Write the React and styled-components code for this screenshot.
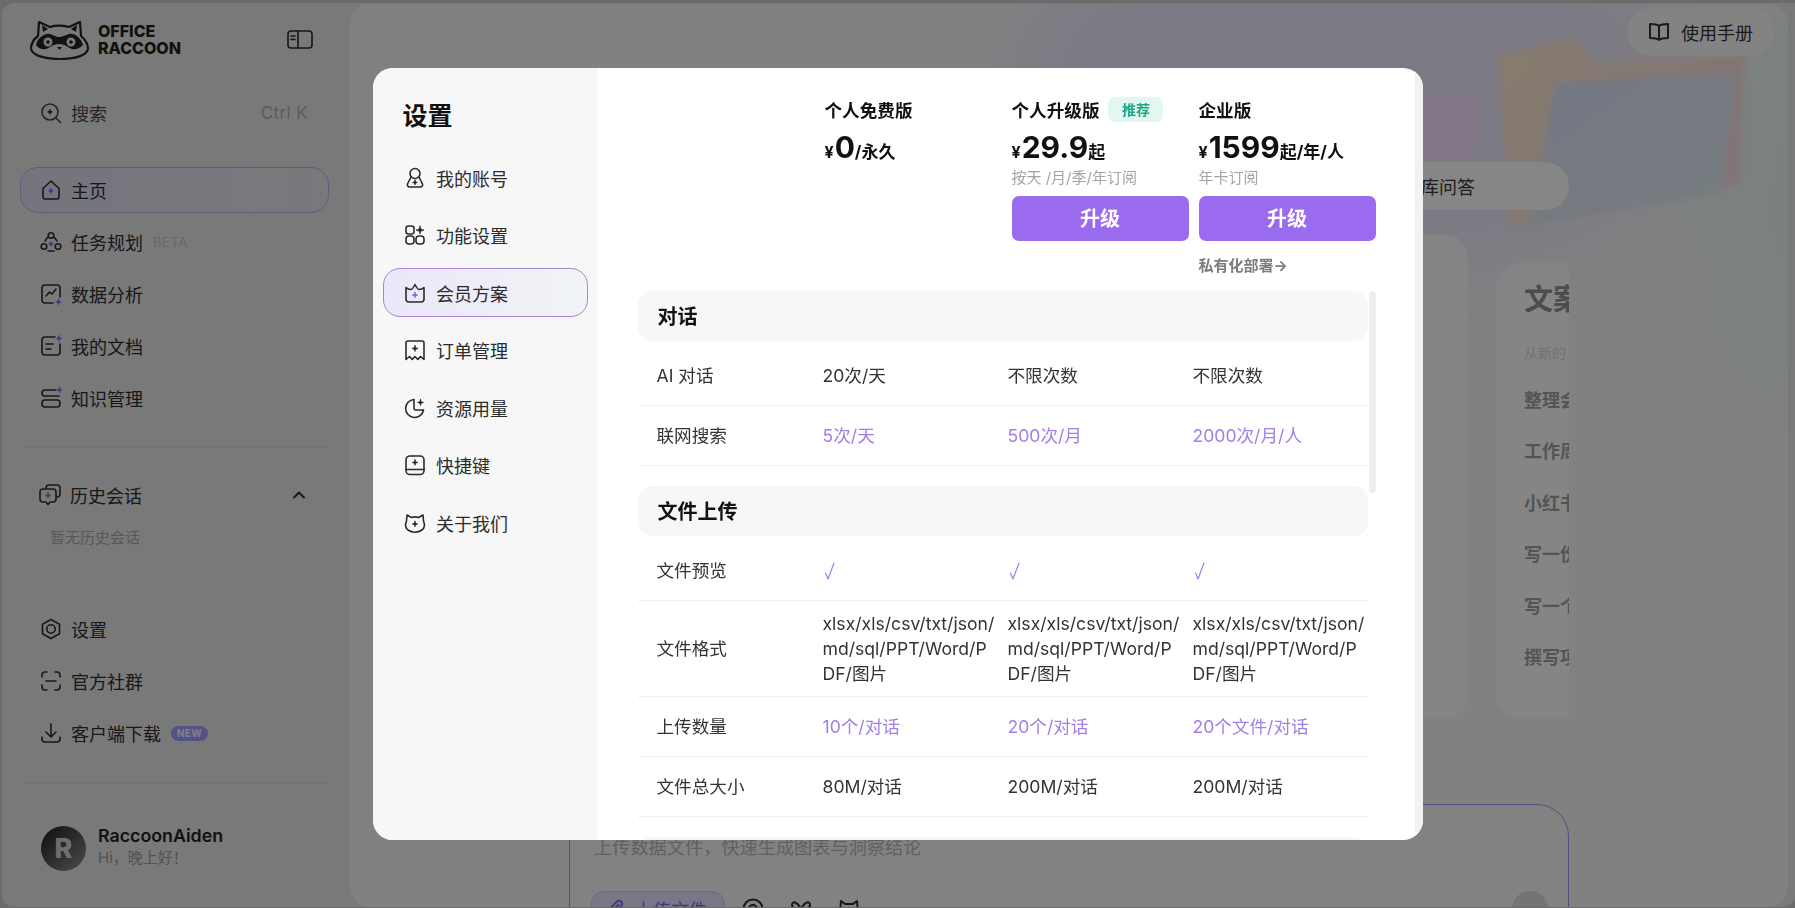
import React from "react";
import styled, { createGlobalStyle } from "styled-components";

const PURPLE = "#7c5ce0";

const GlobalStyle = createGlobalStyle`
  html, body {
    margin: 0;
    height: 100%;
    overflow: hidden;
    background: #c4c4c4;
    font-family: Inter, "Noto Sans CJK SC", sans-serif;
    color: #2a2a2a;
  }
  * { box-sizing: border-box; }
`;

const Shell = styled.div`
  display: flex;
  height: 904px;
  margin: 3px 0 0 2px;
  background: #dcdcdc;
  border-radius: 12px 0 12px 12px;
  overflow: hidden;
`;

/* ---------- app sidebar ---------- */

const Sidebar = styled.aside`
  width: 348px;
  flex-shrink: 0;
  padding: 0 21px 0 18px;
  display: flex;
  flex-direction: column;
`;

const BrandRow = styled.div`
  height: 87px;
  padding: 15px 0 0 10px;
  display: flex;
  align-items: flex-start;
`;

const BrandText = styled.div`
  margin: 5px 0 0 8px;
  font-size: 16px;
  line-height: 16.5px;
  font-weight: 800;
  color: #1e1e1e;
`;

const CollapseBtn = styled.div`
  margin: 12px 0 0 auto;
  padding-right: 16px;
  display: flex;
`;

const SearchBox = styled.div`
  height: 46px;
  border: 1px solid #e2e2e2;
  border-radius: 18px;
  padding: 0 20px 0 18px;
  display: flex;
  align-items: center;
  gap: 8px;
  font-size: 18px;
  color: #444;
`;

const Shortcut = styled.span`
  margin-left: auto;
  color: #a8a8a8;
  font-size: 17px;
  letter-spacing: 0.4px;
`;

const NavList = styled.nav`
  display: flex;
  flex-direction: column;
  gap: 6px;
  margin-top: ${(p) => p.$top || 0}px;
`;

const NavItem = styled.div`
  height: 46px;
  border-radius: 18px;
  padding: 0 18px;
  border: 1px solid ${(p) => (p.$active ? "#aca9ea" : "transparent")};
  background: ${(p) => (p.$active ? "linear-gradient(90deg,#d5d4e6,#dcdce2)" : "transparent")};
  display: flex;
  align-items: center;
  gap: 8px;
  font-size: 18px;
  color: #2c2c2c;
`;

const BetaTag = styled.span`
  margin-left: 2px;
  font-size: 13px;
  letter-spacing: 0.6px;
  color: #bdbdbd;
`;

const NewTag = styled.span`
  margin-left: 2px;
  width: 37px;
  height: 15px;
  border-radius: 8px;
  background: linear-gradient(90deg, #8a9cf4, #ae8cf4);
  color: #e0e4f8;
  font-size: 10px;
  font-weight: 800;
  line-height: 15px;
  text-align: center;
  letter-spacing: 0.4px;
`;

const Divider = styled.div`
  height: 1px;
  background: #d2d2d2;
  margin-top: ${(p) => p.$top}px;
`;

const HistoryHead = styled.div`
  margin-top: 35px;
  height: 24px;
  padding: 0 20px 0 18px;
  display: flex;
  align-items: center;
  gap: 8px;
  font-size: 18px;
  color: #2c2c2c;
`;

const Chevron = styled.span`
  margin-left: auto;
  display: flex;
`;

const EmptyNote = styled.div`
  margin: 22px 0 0 30px;
  font-size: 15px;
  line-height: 18px;
  color: #a0a0a0;
`;

const UserRow = styled.div`
  margin: 41px 0 0 21px;
  display: flex;
  align-items: center;
  gap: 12px;
`;

const Avatar = styled.div`
  width: 45px;
  height: 45px;
  border-radius: 50%;
  background: linear-gradient(135deg, #2a2a2a 15%, #8c8c8c);
  color: #c8c8c8;
  font-size: 27px;
  font-weight: 800;
  display: flex;
  align-items: center;
  justify-content: center;
`;

const UserInfo = styled.div`
  margin-bottom: 2px;
`;

const UserName = styled.div`
  font-size: 17.8px;
  line-height: 22px;
  font-weight: 600;
  color: #222;
`;

const UserHint = styled.div`
  font-size: 15px;
  line-height: 22px;
  color: #959595;
`;

/* ---------- page behind the dialog ---------- */

const Main = styled.main`
  position: relative;
  width: 1438px;
  height: 903px;
  margin-top: 1px;
  background: #ececec;
  border-radius: 20px;
  overflow: hidden;
`;

const Backdrop = styled.svg`
  position: absolute;
  inset: 0;
`;

const MainTop = styled.div`
  position: relative;
  height: 158px;
  padding: 4px 14px 0 0;
  display: flex;
  justify-content: flex-end;
  align-items: flex-start;
`;

const ManualBtn = styled.div`
  width: 147px;
  height: 48px;
  border-radius: 24px;
  background: #eeeeee;
  display: flex;
  align-items: center;
  gap: 10px;
  padding-left: 20px;
  font-size: 18px;
  color: #333;
`;

const Column = styled.div`
  position: relative;
  width: 1000px;
  margin-left: 219px;
`;

const TabPill = styled.div`
  height: 48px;
  border-radius: 24px;
  background: #f4f4f4;
  display: flex;
  align-items: center;
  justify-content: flex-end;
  padding-right: 94px;
  font-size: 18px;
  color: #333;
`;

const CardRow = styled.div`
  height: 484px;
  margin-top: 24px;
  display: flex;
  align-items: flex-end;
  gap: 28px;
  overflow: hidden;
`;

const Card = styled.section`
  flex: 0 0 ${(p) => p.$w}px;
  height: ${(p) => p.$h}px;
  padding: 19px 0 0 28px;
  border-radius: 24px;
  background: rgba(245, 245, 245, 0.7);
  overflow: hidden;
  white-space: nowrap;
`;

const CardTitle = styled.h3`
  margin: 0;
  font-size: 29px;
  line-height: 36px;
  font-weight: 700;
  color: #8a8a8a;
`;

const CardSub = styled.p`
  margin: 26px 0 27px;
  font-size: 14px;
  line-height: 18px;
  color: #cfcfcf;
`;

const CardLine = styled.div`
  height: 51.4px;
  font-size: 18px;
  line-height: 24px;
  font-weight: 700;
  color: #9a9a9a;
`;

const Composer = styled.div`
  margin-top: 86px;
  height: 160px;
  border: 1px solid #9a90ee;
  border-radius: 32px;
  padding: 30px 20px 0 24px;
  background: #ededed;
`;

const Placeholder = styled.div`
  font-size: 18.2px;
  line-height: 24px;
  color: #b0b0b0;
`;

const ComposerTools = styled.div`
  margin: 32px 0 0 -3px;
  display: flex;
  align-items: center;
  gap: 24px;
`;

const UploadBtn = styled.div`
  width: 134px;
  height: 36px;
  margin-right: -8px;
  border-radius: 13px;
  border: 1px solid #c8c0ee;
  background: #dcd8f4;
  display: flex;
  align-items: center;
  gap: 8px;
  padding-left: 13px;
  font-size: 18px;
  color: #7b5fd8;
`;

const SendBtn = styled.div`
  margin-left: auto;
  width: 36px;
  height: 36px;
  border-radius: 50%;
  background: #d4d4d4;
`;

/* ---------- settings dialog ---------- */

const Overlay = styled.div`
  position: fixed;
  inset: 0;
  background: rgba(0, 0, 0, 0.45);
  display: flex;
  align-items: center;
  justify-content: center;
`;

const Dialog = styled.div`
  width: 1050px;
  height: 772px;
  background: #ffffff;
  border-radius: 20px;
  display: flex;
  overflow: hidden;
`;

const SettingsNav = styled.div`
  width: 225px;
  flex-shrink: 0;
  background: #f7f7f8;
  padding: 32px 10px 0;
`;

const SettingsTitle = styled.h2`
  margin: 0 0 21px 20px;
  font-size: 25px;
  line-height: 32px;
  font-weight: 700;
  color: #111;
`;

const SettingsList = styled.div`
  display: flex;
  flex-direction: column;
  gap: 8.5px;
`;

const SettingsItem = styled.div`
  height: 49px;
  border-radius: 17px;
  padding: 0 0 0 19px;
  border: 1px solid ${(p) => (p.$active ? "#a585df" : "transparent")};
  background: ${(p) => (p.$active ? "linear-gradient(90deg,#ebe7f9,#f1f4f5)" : "transparent")};
  display: flex;
  align-items: center;
  gap: 9.5px;
  font-size: 18px;
  color: #2b2b2b;
`;

const Pane = styled.div`
  position: relative;
  flex: 1;
  min-width: 0;
  display: flex;
  flex-direction: column;
  padding-top: 29px;
`;

const PaneTrack = styled.div`
  position: absolute;
  top: 0;
  right: 0;
  bottom: 0;
  width: 8px;
  background: #f2f2f2;
`;

const PlanGrid = styled.div`
  display: grid;
  grid-template-columns: repeat(3, 177px);
  column-gap: 10px;
  margin-left: 227px;
  height: 194px;
`;

const Plan = styled.div`
  display: flex;
  flex-direction: column;
`;

const PlanName = styled.div`
  height: 25px;
  display: flex;
  align-items: center;
  gap: 9px;
  font-size: 17.6px;
  font-weight: 700;
  color: #111;
`;

const Badge = styled.span`
  width: 55px;
  height: 25px;
  border-radius: 7px;
  background: #e2f7f1;
  color: #22a585;
  font-size: 14px;
  line-height: 25px;
  text-align: center;
`;

const Price = styled.div`
  margin-top: 6px;
  height: 38px;
  display: flex;
  align-items: baseline;
  font-weight: 700;
  font-size: 17px;
  color: #111;
  line-height: 38px;
`;

const Currency = styled.span`
  font-size: 16px;
  margin-right: 1px;
`;

const Amount = styled.span`
  font-size: 30px;
`;

const PlanNote = styled.div`
  margin-top: 2px;
  font-size: 15px;
  line-height: 20px;
  color: #a4a4a4;
`;

const UpgradeBtn = styled.div`
  margin-top: 8px;
  height: 45px;
  padding-bottom: 2px;
  border-radius: 7px;
  background: #9a6bef;
  color: #ffffff;
  font-size: 20px;
  font-weight: 700;
  display: flex;
  align-items: center;
  justify-content: center;
`;

const PrivateLink = styled.div`
  margin-top: 15px;
  font-size: 15px;
  line-height: 20px;
  font-weight: 700;
  color: #7c7c7c;
`;

const TableArea = styled.div`
  position: relative;
  flex: 1;
  min-height: 0;
  margin-left: 40px;
  width: 738px;
  overflow: hidden;
`;

const TableThumb = styled.div`
  position: absolute;
  top: 0;
  right: 0;
  width: 7px;
  height: 202px;
  border-radius: 4px;
  background: #eeeeee;
`;

const SectionHead = styled.div`
  width: 730px;
  height: 50px;
  margin: ${(p) => (p.$first ? "0" : "20px")} 0 5px;
  padding: 0 0 2px 20px;
  border-radius: 14px;
  background: #f7f7f7;
  display: flex;
  align-items: center;
  font-size: 20px;
  font-weight: 700;
  color: #111;
`;

const Row = styled.div`
  width: 730px;
  min-height: 60px;
  padding: 10px 0;
  border-bottom: 1px solid #efefef;
  display: grid;
  grid-template-columns: repeat(4, 174px);
  column-gap: 11px;
  align-items: center;
  font-size: 17.6px;
  line-height: 25px;
  color: #333;
`;

const RowLabel = styled.div`
  padding-left: 19px;
`;

const Cell = styled.div`
  word-break: break-all;
  color: ${(p) => (p.$accent ? "#a27fe6" : "#333")};
`;

const CheckMark = styled.svg`
  display: block;
  margin-left: 1px;
  fill: none;
  stroke: #a27fe6;
  stroke-width: 1.2;
  stroke-linecap: round;
  stroke-linejoin: round;
`;

/* ---------- icons ---------- */

const Svg = styled.svg`
  flex-shrink: 0;
  display: block;
  fill: none;
  stroke: currentColor;
  stroke-width: 1.6;
  stroke-linecap: round;
  stroke-linejoin: round;
`;

const Spark = ({ x, y, r = 2.4, color = "#1c1c1c" }) => (
  <path
    d={`M${x} ${y - r}Q${x} ${y} ${x + r} ${y}Q${x} ${y} ${x} ${y + r}Q${x} ${y} ${x - r} ${y}Q${x} ${y} ${x} ${y - r}Z`}
    fill={color}
    stroke={color}
    strokeWidth="0.7"
  />
);

const Icon = ({ children, size = 24 }) => (
  <Svg width={size} height={size} viewBox="0 0 24 24">
    {children}
  </Svg>
);

const Check = () => (
  <CheckMark width="12" height="20" viewBox="0 0 12 20">
    <path d="M1.500 12L4 18 10 2" />
  </CheckMark>
);

const RaccoonLogo = () => (
  <svg width="60" height="42" viewBox="0 0 60 42">
    <path
      d="M9 4l11 5c5-1.500 13-1.500 19 0l11-5 1 14c5 4 7 9 7 13-2 7-14 10-28 10S3 38 1 31c0-5 3-10 7-13z"
      fill="#dcdcdc"
      stroke="#222"
      strokeWidth="2.200"
      strokeLinejoin="round"
    />
    <path
      d="M6 27c2-8 9-12 14-11 4 1 6 3 9 3s6-2 10-3c6-1 12 4 14 11-3 3-7 5-11 4-4-1-6-5-13-5s-9 4-13 5c-4 1-8-1-10-4z"
      fill="#222"
    />
    <circle cx="18" cy="24" r="4.500" fill="#dcdcdc" />
    <circle cx="41" cy="24" r="4.500" fill="#dcdcdc" />
    <circle cx="18" cy="24" r="1.800" fill="#222" />
    <circle cx="41" cy="24" r="1.800" fill="#222" />
    <path d="M12 7l6 4-5 3zM47 7l-6 4 5 3z" fill="#222" />
    <path d="M27 29h5l-2.500 3z" fill="#222" />
  </svg>
);

const Glyphs = {
  search: (
    <>
      <circle cx="11" cy="11" r="8" />
      <path d="M17 17l4.500 4.500" />
      <Spark x={11} y={11} />
    </>
  ),
  home: (
    <>
      <path d="M4 10.500L12 3l8 7.500V19a2 2 0 0 1-2 2H6a2 2 0 0 1-2-2z" />
      <Spark x={12} y={13} color={PURPLE} />
    </>
  ),
  task: (
    <>
      <circle cx="12" cy="5.500" r="2.800" />
      <circle cx="5" cy="16.500" r="2.800" />
      <circle cx="19" cy="16.500" r="2.800" />
      <path d="M8.500 7.500L6 11M15.500 7.500L18 11M9 21h6" />
      <Spark x={12} y={14} color={PURPLE} />
    </>
  ),
  chart: (
    <>
      <path d="M14 21H6a3 3 0 0 1-3-3V6a3 3 0 0 1 3-3h12a3 3 0 0 1 3 3v9" />
      <path d="M7 14l3.500-4 2.500 2 4-5" />
      <Spark x={19.500} y={20} r={2.800} color={PURPLE} />
    </>
  ),
  doc: (
    <>
      <path d="M16 3H6a3 3 0 0 0-3 3v12a3 3 0 0 0 3 3h12a3 3 0 0 0 3-3v-8" />
      <path d="M7 10h7M7 15h5" />
      <Spark x={20} y={4.500} r={2.800} color={PURPLE} />
    </>
  ),
  base: (
    <>
      <path d="M17 4H6a3 3 0 0 0 0 6h14" />
      <rect x="3" y="14" width="18" height="7" rx="3" />
      <Spark x={20.500} y={4} r={2.800} color={PURPLE} />
    </>
  ),
  history: (
    <>
      <path d="M8 5a3 3 0 0 1 3-3h8a3 3 0 0 1 3 3v6a3 3 0 0 1-3 3" />
      <path d="M5 6h10a3 3 0 0 1 3 3v7a3 3 0 0 1-3 3h-3l-2 2.500L8 19H5a3 3 0 0 1-3-3V9a3 3 0 0 1 3-3z" />
      <Spark x={10} y={12.500} r={2.800} color={PURPLE} />
    </>
  ),
  settings: (
    <>
      <path d="M12 2.500l8.500 4.800v9.400L12 21.500l-8.500-4.800V7.300z" />
      <circle cx="12" cy="12" r="4.200" />
    </>
  ),
  group: (
    <>
      <path d="M8 3H6a3 3 0 0 0-3 3v2M16 3h2a3 3 0 0 1 3 3v2M8 21H6a3 3 0 0 1-3-3v-2M16 21h2a3 3 0 0 0 3-3v-2" />
      <path d="M7 12h10" />
    </>
  ),
  download: (
    <>
      <path d="M12 3v12M7 11l5 5 5-5" />
      <path d="M3 16v2a3 3 0 0 0 3 3h12a3 3 0 0 0 3-3v-2" />
    </>
  ),
  account: (
    <>
      <circle cx="12" cy="7.500" r="5" />
      <path d="M8 11l-3.500 7A2.200 2.200 0 0 0 6.500 21h11a2.200 2.200 0 0 0 2-3L16 11" />
      <Spark x={12} y={16.500} />
    </>
  ),
  apps: (
    <>
      <rect x="3" y="3" width="8" height="8" rx="2.500" />
      <rect x="3" y="13" width="8" height="8" rx="3" />
      <rect x="13" y="13" width="8" height="8" rx="3" />
      <Spark x={17} y={7} r={4} />
    </>
  ),
  crown: (
    <>
      <path d="M3 6.500c1.500 1.500 3 2 5 2 1.500 0 3-3 4-5 1 2 2.500 5 4 5 2 0 3.500-.5 5-2V18a3 3 0 0 1-3 3H6a3 3 0 0 1-3-3z" />
      <Spark x={12} y={14} r={2.800} color={PURPLE} />
    </>
  ),
  receipt: (
    <>
      <path d="M3 21.500V5a2 2 0 0 1 2-2h14a2 2 0 0 1 2 2v16.500l-3.500-3-2.700 3-2.800-3-2.800 3-2.700-3z" />
      <Spark x={12} y={10.500} r={3} />
    </>
  ),
  usage: (
    <>
      <path d="M11 3.500a9 9 0 1 0 9.500 10.500H13a2 2 0 0 1-2-2z" />
      <Spark x={17.500} y={6.500} r={3} />
    </>
  ),
  keys: (
    <>
      <rect x="3" y="3" width="18" height="18.500" rx="4" />
      <path d="M3 16.500h18" />
      <Spark x={12} y={9.500} r={2.800} />
    </>
  ),
  about: (
    <>
      <path d="M4 4l4.500 2.500c2-.700 5-.700 7 0L20 4l.500 6c1.500 3.500 1 7-1.500 9-4 3-10 3-14 0-2.500-2-3-5.500-1.500-9z" />
      <Spark x={12} y={13} r={2.800} />
    </>
  ),
  book: (
    <path d="M12 6C10 4 7 4 3 4v14c4 0 7 0 9 2 2-2 5-2 9-2V4c-4 0-7 0-9 2zM12 6v14" strokeWidth="2" />
  ),
  clip: (
    <path d="M20 11l-8.500 8.500a5 5 0 0 1-7-7L13 4a3.300 3.300 0 0 1 4.700 4.700L9.500 17a1.600 1.600 0 0 1-2.300-2.300L15 7" strokeWidth="2" />
  ),
  at: (
    <>
      <circle cx="12" cy="12" r="9.500" strokeWidth="2" />
      <circle cx="12" cy="12" r="4" strokeWidth="2" />
    </>
  ),
  knot: (
    <path d="M12 12C8 4 3 4 3 8c0 4 5 4 9 4s9 0 9-4c0-4-5-4-9 4-3 5-5 8-6 9M12 12c3 5 5 8 6 9" strokeWidth="2" />
  ),
  cat: (
    <>
      <path d="M4 4l4 3h8l4-3 1 12c0 3-4 5-9 5s-9-2-9-5z" strokeWidth="2" />
      <path d="M7 13h10" strokeWidth="3" />
    </>
  ),
  panel: (
    <>
      <rect x="1" y="1" width="24" height="17" rx="3" />
      <path d="M11 1v17M4 6h4M4 9.500h4" />
    </>
  ),
  up: <path d="M6 15l6-6 6 6" strokeWidth="2.400" />,
};

const MAIN_NAV = [
  { icon: "home", label: "主页", active: true },
  { icon: "task", label: "任务规划", tag: <BetaTag>BETA</BetaTag> },
  { icon: "chart", label: "数据分析" },
  { icon: "doc", label: "我的文档" },
  { icon: "base", label: "知识管理" },
];

const FOOT_NAV = [
  { icon: "settings", label: "设置" },
  { icon: "group", label: "官方社群" },
  { icon: "download", label: "客户端下载", tag: <NewTag>NEW</NewTag> },
];

const SETTINGS = [
  { icon: "account", label: "我的账号" },
  { icon: "apps", label: "功能设置" },
  { icon: "crown", label: "会员方案", active: true },
  { icon: "receipt", label: "订单管理" },
  { icon: "usage", label: "资源用量" },
  { icon: "keys", label: "快捷键" },
  { icon: "about", label: "关于我们" },
];

const CARD_LINES = ["整理会", "工作周", "小红书", "写一份", "写一个", "撰写项"];

const FORMATS = "xlsx/xls/csv/txt/json/md/sql/PPT/Word/PDF/图片";

const SECTIONS = [
  {
    title: "对话",
    rows: [
      { label: "AI 对话", values: ["20次/天", "不限次数", "不限次数"] },
      { label: "联网搜索", values: ["5次/天", "500次/月", "2000次/月/人"], accent: true },
    ],
  },
  {
    title: "文件上传",
    rows: [
      { label: "文件预览", values: [<Check />, <Check />, <Check />], accent: true },
      { label: "文件格式", values: [FORMATS, FORMATS, FORMATS] },
      { label: "上传数量", values: ["10个/对话", "20个/对话", "20个文件/对话"], accent: true },
      { label: "文件总大小", values: ["80M/对话", "200M/对话", "200M/对话"] },
    ],
  },
  { title: "", rows: [] },
];

const Navigation = ({ items, top }) => (
  <NavList $top={top}>
    {items.map((item) => (
      <NavItem key={item.label} $active={item.active}>
        <Icon>{Glyphs[item.icon]}</Icon>
        {item.label}
        {item.tag}
      </NavItem>
    ))}
  </NavList>
);

const AppSidebar = () => (
  <Sidebar>
    <BrandRow>
      <RaccoonLogo />
      <BrandText>
        OFFICE
        <br />
        RACCOON
      </BrandText>
      <CollapseBtn>
        <Svg width="26" height="19" viewBox="0 0 26 19">
          {Glyphs.panel}
        </Svg>
      </CollapseBtn>
    </BrandRow>
    <SearchBox>
      <Icon>{Glyphs.search}</Icon>
      搜索
      <Shortcut>Ctrl K</Shortcut>
    </SearchBox>
    <Navigation items={MAIN_NAV} top={31} />
    <Divider $top={26} />
    <HistoryHead>
      <Icon>{Glyphs.history}</Icon>
      历史会话
      <Chevron>
        <Icon size={20}>{Glyphs.up}</Icon>
      </Chevron>
    </HistoryHead>
    <EmptyNote>暂无历史会话</EmptyNote>
    <Navigation items={FOOT_NAV} top={59} />
    <Divider $top={27} />
    <UserRow>
      <Avatar>R</Avatar>
      <UserInfo>
        <UserName>RaccoonAiden</UserName>
        <UserHint>Hi，晚上好！</UserHint>
      </UserInfo>
    </UserRow>
  </Sidebar>
);

const MainPage = () => (
  <Main>
    <Backdrop width="1438" height="903" viewBox="350 4 1438 903">
      <defs>
        <filter id="soft" x="-30%" y="-30%" width="160%" height="160%">
          <feGaussianBlur stdDeviation="3" />
        </filter>
        <filter id="wide" x="-50%" y="-50%" width="200%" height="200%">
          <feGaussianBlur stdDeviation="50" />
        </filter>
        <linearGradient id="pane" x1="0" y1="0" x2="1" y2="1">
          <stop offset="0" stopColor="#d2d8f0" />
          <stop offset="1" stopColor="#d8e4e6" />
        </linearGradient>
        <linearGradient id="fold" x1="0" y1="0" x2="1" y2="0.600">
          <stop offset="0" stopColor="#f6e2c8" />
          <stop offset="1" stopColor="#ead4d8" />
        </linearGradient>
      </defs>
      <ellipse cx="1350" cy="90" rx="340" ry="190" fill="#e0dcf0" filter="url(#wide)" />
      <ellipse cx="1790" cy="200" rx="80" ry="220" fill="#dcece6" filter="url(#wide)" />
      <path d="M1420 95h62l-8 70h-54z" fill="#ead8f2" filter="url(#soft)" />
      <path d="M1498 55l75-17 22 25 150-8-6 130-230 40z" fill="url(#fold)" filter="url(#soft)" />
      <path d="M1555 82l180-8-14 120-190 30z" fill="url(#pane)" filter="url(#soft)" />
    </Backdrop>
    <MainTop>
      <ManualBtn>
        <Icon>{Glyphs.book}</Icon>
        使用手册
      </ManualBtn>
    </MainTop>
    <Column>
      <TabPill>库问答</TabPill>
      <CardRow>
        <Card $w={899} $h={484} />
        <Card $w={400} $h={455}>
          <CardTitle>文案</CardTitle>
          <CardSub>从新的</CardSub>
          {CARD_LINES.map((line) => (
            <CardLine key={line}>{line}</CardLine>
          ))}
        </Card>
      </CardRow>
      <Composer>
        <Placeholder>上传数据文件，快速生成图表与洞察结论</Placeholder>
        <ComposerTools>
          <UploadBtn>
            <Icon size={22}>{Glyphs.clip}</Icon>
            上传文件
          </UploadBtn>
          <Icon>{Glyphs.at}</Icon>
          <Icon>{Glyphs.knot}</Icon>
          <Icon>{Glyphs.cat}</Icon>
          <SendBtn />
        </ComposerTools>
      </Composer>
    </Column>
  </Main>
);

const SettingsDialog = () => (
  <Overlay>
    <Dialog>
      <SettingsNav>
        <SettingsTitle>设置</SettingsTitle>
        <SettingsList>
          {SETTINGS.map((item) => (
            <SettingsItem key={item.label} $active={item.active}>
              <Icon>{Glyphs[item.icon]}</Icon>
              {item.label}
            </SettingsItem>
          ))}
        </SettingsList>
      </SettingsNav>
      <Pane>
        <PaneTrack />
        <PlanGrid>
          <Plan>
            <PlanName>个人免费版</PlanName>
            <Price>
              <Currency>¥</Currency>
              <Amount>0</Amount>/永久
            </Price>
          </Plan>
          <Plan>
            <PlanName>
              个人升级版<Badge>推荐</Badge>
            </PlanName>
            <Price>
              <Currency>¥</Currency>
              <Amount>29.9</Amount>起
            </Price>
            <PlanNote>按天 /月/季/年订阅</PlanNote>
            <UpgradeBtn>升级</UpgradeBtn>
          </Plan>
          <Plan>
            <PlanName>企业版</PlanName>
            <Price>
              <Currency>¥</Currency>
              <Amount>1599</Amount>起/年/人
            </Price>
            <PlanNote>年卡订阅</PlanNote>
            <UpgradeBtn>升级</UpgradeBtn>
            <PrivateLink>私有化部署→</PrivateLink>
          </Plan>
        </PlanGrid>
        <TableArea>
          <TableThumb />
          {SECTIONS.map((section, i) => (
            <React.Fragment key={i}>
              <SectionHead $first={i === 0}>{section.title}</SectionHead>
              {section.rows.map((row) => (
                <Row key={row.label}>
                  <RowLabel>{row.label}</RowLabel>
                  {row.values.map((value, j) => (
                    <Cell key={j} $accent={row.accent}>
                      {value}
                    </Cell>
                  ))}
                </Row>
              ))}
            </React.Fragment>
          ))}
        </TableArea>
      </Pane>
    </Dialog>
  </Overlay>
);

export default function App() {
  return (
    <>
      <GlobalStyle />
      <Shell>
        <AppSidebar />
        <MainPage />
      </Shell>
      <SettingsDialog />
    </>
  );
}
